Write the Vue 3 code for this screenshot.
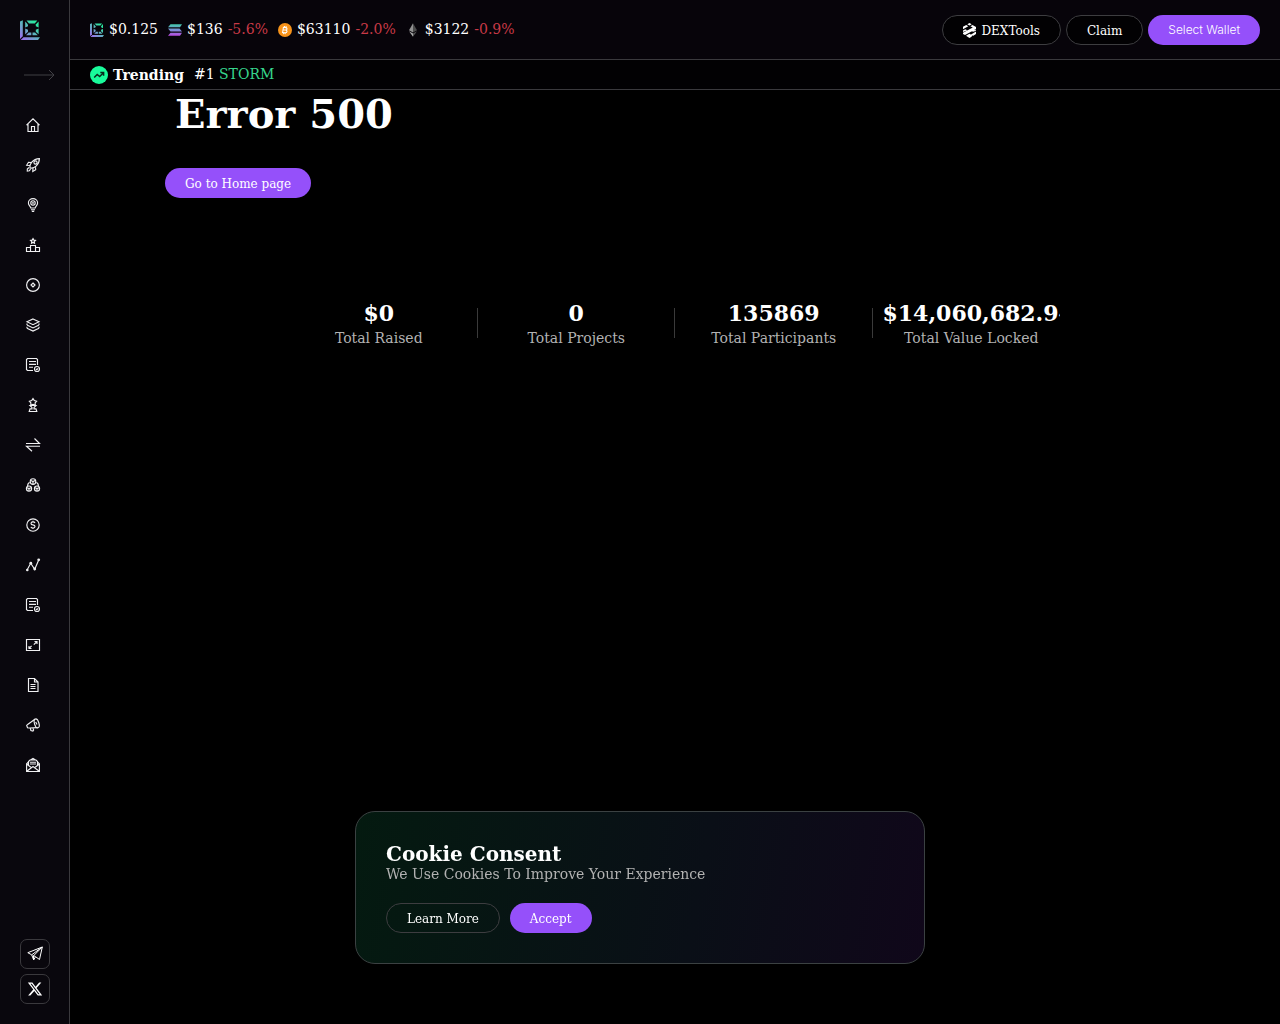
<script setup>
const navItems = [
  { label: 'Home', icon: '<path d="M.5 7.200 7 .8l6.500 6.400M2 6v7.500h10V6M5.500 13.500V8.500h3v5"/>' },
  { label: 'Launchpad', icon: '<path d="M4 10C3 6.500 6.500 1 13.400.6 13.400 6.500 8.500 11 4 10ZM5 4.500 2.500 4.300.7 7.200l3 .3M9.500 9.200l.2 2.600-2.900 1.700.2-3.200M3 9.500 1.300 11v2l2-.3 1.300-1.500"/><circle cx="9.500" cy="4.500" r="1.600"/>' },
  { label: 'Ideas', icon: '<path d="M4.800 10C4.800 8.300 2.400 7.500 2.400 4.900a4.600 4.300 0 0 1 9.200 0C11.600 7.500 9.200 8.300 9.200 10ZM5 11.700h4M5.800 13.400h2.400"/><circle cx="7" cy="4.900" r="2.200"/><circle class="dot" cx="7" cy="4.900" r=".9"/>' },
  { label: 'Leaderboard', icon: '<path d="M.5 13.500V9.500h4v4ZM4.500 13.500v-6h5v6ZM9.500 13.500v-4h4v4ZM.5 13.500h13M7 .6l.8 1.500 1.600.2-1.200 1.200.3 1.700L7 4.400l-1.500.8.3-1.700-1.200-1.200 1.600-.2Z"/>' },
  { label: 'Tokens', icon: '<circle cx="7" cy="7" r="6.400"/><path d="m7 5 2 2-2 2-2-2Z"/>' },
  { label: 'Staking', icon: '<path d="m7 .9 6 2.900-6 2.900-6-2.900ZM1 7l6 2.900L13 7M1 5.500V7M13 5.500V7M1 10.200l6 2.900 6-2.900M1 8.700v1.500M13 8.700v1.500"/>' },
  { label: 'Vesting', icon: '<path d="M11.500 7V1.500l-1-1h-9l-1 1v10l1 1H7M3 3.500h7M3 6.300h7M3 9.200h4"/><circle cx="11" cy="11" r="2.500"/><path d="m10 11 .8.700 1.300-1.400"/>' },
  { label: 'Rewards', icon: '<path d="m7 .6 1.300 2 2.300.6-1.500 1.700.2 2.200L7 6.300l-2.300.8.2-2.200-1.500-1.700 2.300-.6ZM4 7.500h6L8 9.500v1.300h2l.8 2.700H3.200L4 10.800h2V9.500Z"/>' },
  { label: 'Swap', icon: '<path d="M0 5.500h13.500L8.500 .5M14 8.200H.5l5.500 5"/>' },
  { label: 'Blockchain', icon: '<circle cx="7" cy="3.500" r="2.800"/><circle cx="3" cy="10.600" r="2.600"/><circle cx="11" cy="10.600" r="2.600"/><path d="m4.800 2.500 2.200 1 2.200-1M7 3.500v2.800M1 9.700l2 .9 2-.9M3 10.600V13M9 9.700l2 .9 2-.9M11 10.600V13M3.700 4.500Q1.700 5 1.600 8M10.300 4.500Q12.300 5 12.400 8"/>' },
  { label: 'Earn', icon: '<circle cx="7" cy="7" r="6.200"/><path d="M9 5Q8.600 3.900 7 3.900 5 3.900 5 5.400 5 6.700 7 6.900 9 7.200 9 8.600 9 10.100 7 10.100 5.300 10.100 4.900 9M7 2.800v1M7 10.100v1"/>' },
  { label: 'Analytics', icon: '<path d="m1.200 11.800 3.500-6.500 4 6L12.700 2"/><circle class="dot" cx="1.300" cy="12" r="1.300"/><circle class="dot" cx="4.800" cy="5.200" r="1.400"/><circle class="dot" cx="8.700" cy="11" r="1.400"/><circle class="dot" cx="12.700" cy="1.800" r="1.400"/>' },
  { label: 'Orders', icon: '<path d="M11.500 7V1.500l-1-1h-9l-1 1v10l1 1H7M3 3.500h7M3 6.300h7M3 9.200h4"/><circle cx="11" cy="11" r="2.500"/><path d="m10 11 .8.700 1.300-1.400"/>' },
  { label: 'Bridge', icon: '<path d="M.5 1.500h13v11H.5ZM8.500 3.500H11V6M11 3.500 7.800 6.700M3 8v2.500h2.500M3 10.500l2.600-2.600"/>' },
  { label: 'Documents', icon: '<path d="M2.500.5h6l3.500 3.500v9.500H2.500ZM8.500.5V4H12M4.500 6.500h5M4.500 8.500h5M4.500 10.500h5"/>' },
  { label: 'Announcements', icon: '<path d="M9.200 1 2 6.200.7 7.400l.8 2.300 1.700.3 8.300-.4M4.300 10l.6 2.500 2 .6.7-1-.7-2.200"/><ellipse cx="10.700" cy="5.400" rx="2.200" ry="4.600" transform="rotate(-17 10.700 5.400)"/><path d="M9.700 4 11 6.500"/>' },
  { label: 'Contact', icon: '<path d="M2.500 4 .6 5.700v7.800h12.800V5.700L11.500 4M.6 6l4.900 3.800M13.400 6 8.500 9.800M.8 13.300 7 8.500l6.200 4.800M2.500 7.300V3.500L4 2h6l1.500 1.500v3.800M4.500 2 7 .5 9.500 2M4 4.200h6M4 6h6"/>' }
]

const prices = [
  { id: 'brand', price: '$0.125', change: '' },
  { id: 'sol', price: '$136', change: '-5.6%' },
  { id: 'btc', price: '$63110', change: '-2.0%' },
  { id: 'eth', price: '$3122', change: '-0.9%' }
]

const stats = [
  { value: '$0', label: 'Total Raised' },
  { value: '0', label: 'Total Projects' },
  { value: '135869', label: 'Total Participants' },
  { value: '$14,060,682.94', label: 'Total Value Locked' }
]
</script>

<template>
  <div class="layout">
    <svg class="defs" width="0" height="0" aria-hidden="true">
      <defs>
        <linearGradient id="brandFill" gradientUnits="userSpaceOnUse" x1="18" y1="2" x2="2" y2="20">
          <stop offset="0.1" stop-color="#2be8a0" />
          <stop offset="0.5" stop-color="#62b0c0" />
          <stop offset="1" stop-color="#a06cf0" />
        </linearGradient>
        <linearGradient id="solFill" x1="0" y1="0" x2="0" y2="1">
          <stop offset="0" stop-color="#43c9aa" />
          <stop offset="0.5" stop-color="#7b8fd8" />
          <stop offset="1" stop-color="#b84be0" />
        </linearGradient>
        <symbol id="brandMark" viewBox="0 0 20 20">
          <g fill="url(#brandFill)">
            <path d="M0 1.500 2.800.2V16.200L0 19Z" />
            <path d="M3.500 17.200H20L18 19.900H.7Z" />
            <path d="M6.500.6H17.300L14.800 3.600H9Z" />
            <path d="M18.600 1.500V7.600L15.800 6.200V4.500Z" />
            <path d="M18.600 8.600V14.300L15.800 11.800V9.800Z" />
            <path d="M5.200 1.500 8 4.500v1.700L5.200 7.600Z" />
            <path d="M5.200 14.300V8.600L8 9.800v2Z" />
            <path d="M8.700 12.500h2.600v2.800H6Z" />
            <path d="M12.500 12.500h2.600l2.700 2.800h-5.300Z" />
          </g>
        </symbol>
      </defs>
    </svg>

    <aside class="sidebar">
      <a class="logo" href="#" aria-label="Home">
        <svg width="20" height="20"><use href="#brandMark" /></svg>
      </a>
      <button class="expand" type="button" aria-label="Expand menu">
        <svg width="32" height="12" viewBox="0 0 32 12"><path d="M1 6h30M26 1l5 5-5 5" /></svg>
      </button>
      <nav class="nav">
        <a v-for="item in navItems" :key="item.label" href="#" :aria-label="item.label">
          <svg class="nav-icon" width="14" height="14" viewBox="0 0 14 14" stroke-width="1.150" v-html="item.icon"></svg>
        </a>
      </nav>
      <div class="social">
        <a href="#" aria-label="Telegram">
          <svg width="16" height="16" viewBox="0 0 16 16">
            <path class="line" d="M.8 6.700 15.300 1 12.500 13.500 8.500 10.700 6.700 14 4.700 8.800ZM15.300 1 4.700 8.800M15.300 1 6.500 9.800v4M6.500 9.500l2 1.200" />
          </svg>
        </a>
        <a href="#" aria-label="X">
          <svg width="16" height="16" viewBox="0 0 24 24">
            <path fill="#fff" d="M18.244 1.250h3.308l-7.227 8.260 8.502 11.240H16.170l-5.214-6.817L4.990 20.750H1.680l7.730-8.835L1.254 1.250H8.080l4.713 6.231zm-1.161 17.520h1.833L7.084 3.126H5.117z" transform="translate(0 1)" />
          </svg>
        </a>
      </div>
    </aside>

    <div class="page">
      <header class="header">
        <ul class="prices">
          <li v-for="coin in prices" :key="coin.id">
            <svg v-if="coin.id === 'brand'" width="14" height="14"><use href="#brandMark" /></svg>
            <svg v-else-if="coin.id === 'sol'" width="14" height="14" viewBox="0 0 14 14">
              <path fill="url(#solFill)" d="M2.500 1.300H14L12 4.300H0ZM0 5.500h11.500l2.500 3H2.500ZM2.500 9.700H14L12 12.700H0Z" />
            </svg>
            <svg v-else-if="coin.id === 'btc'" width="14" height="14" viewBox="0 0 14 14">
              <circle cx="7" cy="7" r="7" fill="#f7931a" />
              <path d="M5.500 4 4.500 10M5 4.300l2.700.3c2 .3 1.600 2.500-.2 2.400L5.300 6.800M7.500 7c2.300.3 1.700 3-.5 2.800L4 9.500M6.800 3 6.600 4.200M8.400 3.300 8.200 4.500M5.600 9.800l-.2 1.300M7.200 9.900 7 11.200" fill="none" stroke="#fff" stroke-width="1.100" />
            </svg>
            <svg v-else width="14" height="14" viewBox="0 0 14 14">
              <path fill="#909090" d="M7 .3V9.500L3 7.200Z" />
              <path fill="#4c4c4c" d="M7 .3 11 7.200 7 9.500Z" />
              <path fill="#aaa" d="M3 8.300 7 10.600v3.200Z" />
              <path fill="#555" d="M11 8.300 7 10.600v3.200Z" />
            </svg>
            <span>{{ coin.price }}</span>
            <span v-if="coin.change" class="down">{{ coin.change }}</span>
          </li>
        </ul>
        <div class="actions">
          <a class="btn outline" href="#">
            <svg width="13" height="15" viewBox="0 0 13 15" fill="#fff">
              <path d="M4.300 1.300 6.500 0 8.700 1.300 6.500 2.500ZM3.200 2 5.300 3.200 0 6.300V3.800ZM9.500 2 13 3.900V6L2 12 0 10.900V9.800L9.800 4.500 7.400 3.300ZM0 7.600 2.300 6.200 4.300 7.300 0 9ZM13 7.400 10.700 8.800 8.700 7.700 13 6.800ZM13 8.500V11L10.300 12.700 7.700 11.700ZM3 12.800 6.500 10.800 9.300 12.400 8.500 13.800 6.500 15Z" />
            </svg>
            DEXTools
          </a>
          <button class="btn outline" type="button">Claim</button>
          <button class="btn primary wallet" type="button">Select Wallet</button>
        </div>
      </header>

      <div class="trending">
        <svg width="18" height="18" viewBox="0 0 18 18">
          <circle cx="9" cy="9" r="9" fill="#19fb9b" />
          <path d="m4.200 11.500 3-3 2.500 2 3.500-3.500M10.300 6.500h3.300v3.300" fill="none" stroke="#092b1c" stroke-width="1.500" />
        </svg>
        <strong>Trending</strong>
        <span class="rank">#1 <a href="#">STORM</a></span>
      </div>

      <main>
        <section class="error">
          <h1>Error 500</h1>
          <a class="btn primary" href="#">Go to Home page</a>
        </section>
        <dl class="stats">
          <div v-for="stat in stats" :key="stat.label" class="stat">
            <dt>{{ stat.label }}</dt>
            <dd>{{ stat.value }}</dd>
          </div>
        </dl>
      </main>
    </div>

    <section class="cookie" aria-labelledby="cookie-title">
      <h2 id="cookie-title">Cookie Consent</h2>
      <p>We Use Cookies To Improve Your Experience</p>
      <div class="cookie-actions">
        <a class="btn outline" href="#">Learn More</a>
        <button class="btn primary" type="button">Accept</button>
      </div>
    </section>
  </div>
</template>

<style>
body {
  background: #000;
}
</style>

<style scoped>
* {
  box-sizing: border-box;
}

.layout {
  display: flex;
  min-height: 100vh;
  color: #fff;
  background: #000;
  font-family: "DejaVu Serif", serif;
  font-size: 14px;
  line-height: 16px;
}

.defs {
  position: absolute;
}

svg {
  display: block;
  flex: none;
}

a {
  color: inherit;
  text-decoration: none;
}

.sidebar {
  display: flex;
  flex: none;
  flex-direction: column;
  width: 70px;
  padding: 20px 0;
  border-right: 1px solid #3a393d;
  background: #09070d;
}

.logo {
  align-self: flex-start;
  margin-left: 20px;
}

.expand {
  align-self: flex-end;
  margin: 29px 14px 0 0;
  padding: 0;
  border: 0;
  background: none;
}

.expand path {
  fill: none;
  stroke: #414045;
}

.nav {
  display: flex;
  flex-direction: column;
  margin-top: 24px;
}

.nav a {
  display: flex;
  align-items: center;
  height: 40px;
  padding-left: 26px;
}

.nav-icon {
  overflow: visible;
  fill: none;
  stroke: #f0f0f2;
}

.nav-icon :deep(.dot) {
  fill: #f0f0f2;
  stroke: none;
}

.social {
  display: flex;
  flex-direction: column;
  gap: 5px;
  align-items: center;
  margin-top: auto;
}

.social a {
  display: grid;
  place-items: center;
  width: 30px;
  height: 30px;
  border: 1px solid #3a393d;
  border-radius: 7px;
}

.line {
  fill: none;
  stroke: #fff;
  stroke-linejoin: round;
}

.page {
  flex: 1;
  min-width: 0;
}

.header {
  display: flex;
  align-items: center;
  justify-content: space-between;
  height: 60px;
  padding: 0 20px;
  border-bottom: 1px solid #3a393d;
  background: #07040a;
}

.prices {
  display: flex;
  gap: 10px;
  margin: 0;
  padding: 0;
  list-style: none;
}

.prices li {
  display: flex;
  gap: 5px;
  align-items: center;
}

.prices span,
.rank {
  padding-bottom: 2px;
}

.down {
  color: #c93a47;
}

.actions {
  display: flex;
  gap: 5px;
}

.btn {
  display: inline-flex;
  gap: 5px;
  align-items: center;
  justify-content: center;
  height: 30px;
  padding: 2px 20px 0;
  border: 0;
  border-radius: 15px;
  color: #fff;
  font: 12px/16px "DejaVu Serif", serif;
  white-space: nowrap;
  cursor: pointer;
}

.outline {
  border: 1px solid #3d3d40;
  background: transparent;
}

.actions .outline {
  background: #020103;
}

.primary {
  background: #9550fa;
}

.wallet {
  padding-top: 0;
  font-family: Inter, sans-serif;
  font-weight: 300;
}

.trending {
  display: flex;
  gap: 5px;
  align-items: center;
  height: 30px;
  padding: 0 20px;
  border-bottom: 1px solid #3a393d;
  background: #020103;
}

.rank {
  margin-left: 5px;
}

.rank a {
  color: #36d68c;
}

.error {
  width: 100%;
  max-width: 1020px;
  margin: 0 auto;
}

h1 {
  margin: 0;
  padding: 0 10px;
  font-size: 40px;
  line-height: 48px;
}

.error .btn {
  margin-top: 30px;
}

.stats {
  display: flex;
  width: 100%;
  max-width: 790px;
  margin: 100px auto 0;
}

.stat {
  display: flex;
  flex: 1;
  flex-direction: column-reverse;
  gap: 2px;
  min-width: 0;
  padding: 2px 10px 0;
  text-align: center;
  background: linear-gradient(#3a3a3a, #3a3a3a) right center / 1px 30px no-repeat;
}

.stat:last-child {
  background: none;
}

dt {
  color: #b2b2b2;
  line-height: 20px;
}

dd {
  margin: 0;
  overflow: hidden;
  font-size: 22px;
  font-weight: bold;
  line-height: 26px;
}

.cookie {
  position: fixed;
  bottom: 60px;
  left: 50%;
  width: 570px;
  max-width: 100%;
  padding: 32px 30px 30px;
  border: 1px solid #3b4142;
  border-radius: 20px;
  background: linear-gradient(100deg, #041a10 0%, #0a0f17 60%, #10071a 100%);
  transform: translateX(-50%);
}

h2 {
  margin: 0;
  font-size: 20px;
  line-height: 20px;
}

p {
  margin: 0;
  color: #b2b2b2;
  line-height: 20px;
}

.cookie-actions {
  display: flex;
  gap: 10px;
  margin-top: 19px;
}
</style>
